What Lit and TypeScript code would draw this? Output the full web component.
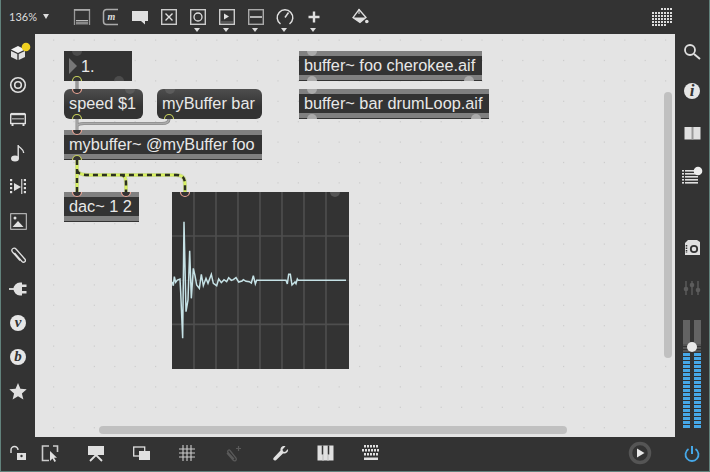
import { LitElement, html, css, svg } from "lit";
import { customElement } from "lit/decorators.js";

const I = "#e0e0e0";
const ic = (w: number, h: number, body: unknown, cls = "") =>
  html`<svg class="ic ${cls}" width=${w} height=${h} viewBox="0 0 ${w} ${h}">${body}</svg>`;

const topIcons = [
  { c: 81.5, arrow: false, i: ic(18, 18, svg`<path d="M1.500 1v16" stroke="#999" stroke-width="1.300"/><path d="M16.500 1v16" stroke="#999" stroke-width="1.300"/><rect x="1" y="1" width="16" height="1.800" fill="#aaa"/><rect x="3" y="13.500" width="12" height="3" fill="#8a8a8a"/><rect x="3" y="12" width="12" height="1" fill="#bbb"/>`) },
  { c: 110.5, arrow: false, i: html`<svg class="ic" width="18" height="18" viewBox="0 0 18 18"><path d="M16 1.500H4.500a3 3 0 0 0-3 3v9a3 3 0 0 0 3 3H16" fill="none" stroke="#aaa" stroke-width="1.500"/><text x="9.500" y="11.500" font-family="Liberation Serif" font-style="italic" font-weight="bold" font-size="10" fill="#ddd" text-anchor="middle">m</text></svg>` },
  { c: 139.5, arrow: false, i: ic(18, 18, svg`<path d="M1 3h16v10h-3v3.500L10 13H1z" fill="${I}"/>`) },
  { c: 168.5, arrow: false, i: ic(18, 18, svg`<rect x="1.700" y="1.700" width="14.600" height="14.600" fill="none" stroke="#ccc" stroke-width="1.400"/><path d="M5.500 5.500l7 7M12.500 5.500l-7 7" stroke="${I}" stroke-width="1.400"/>`) },
  { c: 197.5, arrow: true, i: ic(18, 18, svg`<rect x="1.700" y="1.700" width="14.600" height="14.600" fill="none" stroke="#ccc" stroke-width="1.400"/><circle cx="9" cy="9" r="4" fill="none" stroke="${I}" stroke-width="1.300"/>`) },
  { c: 226.5, arrow: true, i: ic(18, 18, svg`<rect x="1.700" y="1.700" width="14.600" height="14.600" fill="none" stroke="#ccc" stroke-width="1.400"/><path d="M6 5.500v6l5-3z" fill="${I}"/><path d="M3 14h12" stroke="#777"/>`) },
  { c: 255.5, arrow: true, i: ic(18, 18, svg`<rect x="1.700" y="1.700" width="14.600" height="14.600" fill="none" stroke="#aaa" stroke-width="1.400"/><path d="M3 9h12" stroke="${I}" stroke-width="1.500"/>`) },
  { c: 284.5, arrow: true, i: ic(18, 18, svg`<path d="M4.500 16A7.800 7.800 0 1 1 13.500 16" fill="none" stroke="${I}" stroke-width="1.500"/><path d="M9 9.500l3.500-5" stroke="${I}" stroke-width="1.500"/>`) },
  { c: 313.5, arrow: true, i: ic(14, 18, svg`<path d="M7 3.500v11M1.500 9h11" stroke="${I}" stroke-width="2.400"/>`) },
  { c: 360, arrow: false, i: ic(18, 18, svg`<path d="M8 1.500l7 8-6 5-7-5z" fill="none" stroke="${I}" stroke-width="1.300"/><path d="M2 9.500h13l-6 5z" fill="${I}"/><path d="M8 1v5" stroke="${I}"/><circle cx="15.800" cy="13.500" r="1.800" fill="${I}"/>`) },
];

const dots = (xs: number[][]) => xs.map(([x, y]) => svg`<rect x=${x} y=${y} width="2" height="2" fill="#ddd"/>`);
const grid = (() => {
  const o: number[][] = [];
  for (let r = 0; r < 6; r++) for (let c = 0; c < 7; c++) {
    if ((r === 0 && c < 3) || (r === 5 && c > 4)) continue;
    o.push([c * 3, r * 3 + (r === 0 ? 0 : 1)]);
  }
  return o;
})();

const leftIcons = [
  ic(26, 22, svg`<path d="M10 6l7 3.500-7 3.500-7-3.500z" fill="#f2f2f2"/><path d="M3 11l6.300 3v6L3 17z" fill="${I}"/><path d="M10.700 14L17 11v6l-6.300 3z" fill="${I}"/><circle cx="18" cy="7" r="4.300" fill="#f0d020"/>`, "cube"),
  ic(18, 18, svg`<circle cx="9" cy="9" r="7.300" fill="none" stroke="${I}" stroke-width="1.600"/><circle cx="9" cy="9" r="3.300" fill="none" stroke="${I}" stroke-width="1.600"/>`),
  ic(18, 16, svg`<rect x="1.700" y="3.500" width="14.600" height="9" fill="none" stroke="${I}" stroke-width="1.400"/><rect x="3" y="7" width="12" height="1.500" fill="#999"/><path d="M3.500 12.500v2.500M14.500 12.500v2.500" stroke="${I}" stroke-width="2"/><path d="M1.700 2.500h14.600" stroke="${I}" stroke-width="1.200"/>`),
  ic(16, 18, svg`<ellipse cx="5" cy="14.500" rx="4" ry="3" fill="${I}"/><path d="M8.200 14.500V1c.5 3 5.500 3.500 5.500 8" fill="none" stroke="${I}" stroke-width="1.400"/>`),
  ic(18, 18, svg`${[1, 5, 9, 13].map((y) => svg`<rect x="1" y=${y} width="2.200" height="2.200" fill="${I}"/><rect x="14.800" y=${y} width="2.200" height="2.200" fill="${I}"/>`)}<path d="M5 5v8l7-4z" fill="${I}"/><rect x="12" y="1" width="1.400" height="15" fill="#bbb"/>`),
  ic(17, 17, svg`<rect x="0.700" y="0.700" width="15.600" height="15.600" fill="none" stroke="#ccc" stroke-width="1"/><circle cx="5" cy="5" r="1.500" fill="${I}"/><path d="M2.500 14l5.500-6 5.500 6z" fill="${I}"/>`),
  ic(16, 18, svg`<path d="M4.500 7l7.500 8.500c2 2 4.500-.5 2.800-2.500L6 3C4 .500 .500 3.500 2.500 6L10 14.500" fill="none" stroke="${I}" stroke-width="1.300"/>`),
  ic(18, 16, svg`<path d="M0 8h5" stroke="${I}" stroke-width="1.800"/><path d="M4.500 8a6.500 6.500 0 0 1 6.500-6.500h2v13h-2A6.500 6.500 0 0 1 4.500 8z" fill="${I}"/><rect x="12" y="3.500" width="5.500" height="2.500" fill="${I}"/><rect x="12" y="10" width="5.500" height="2.500" fill="${I}"/>`),
  html`<span class="ball">v</span>`,
  html`<span class="ball">b</span>`,
  ic(18, 17, svg`<path d="M9 0l2.400 5.800 6.300.5-4.800 4.100 1.500 6.100L9 13.300 3.600 16.500 5.100 10.400.300 6.300 6.600 5.800z" fill="${I}"/>`),
];

const rightIcons = [
  ic(18, 18, svg`<circle cx="7" cy="7" r="5" fill="none" stroke="${I}" stroke-width="1.800"/><path d="M11 11l6 5" stroke="${I}" stroke-width="2"/>`),
  html`<span class="ball info">i</span>`,
  ic(17, 14, svg`<rect x="0.500" y="1" width="16" height="12.500" fill="${I}"/><rect x="7.500" y="1" width="2" height="12.500" fill="#999"/>`),
  ic(22, 18, svg`${[4, 7, 10, 13, 16].map((y) => svg`<rect x="1" y=${y} width="2" height="1.600" fill="${I}"/><rect x="4" y=${y} width="13" height="1.600" fill="${I}"/>`)}<circle cx="17" cy="5" r="4.300" fill="#eee"/>`, "list"),
];

const sigCord = "M77 160V192M77 170C78 174 82 175 88 175H176C183 175 185 178 185 185V192M120 175C125 175 126 178 126 184V192";
const wave = "36,290 40,302 43,275 47,292 52,285 60,282 62,320 68,460 72,110 78,380 84,345 89,197 94,340 100,250 105,272 110,300 118,310 124,268 130,302 138,280 144,295 154,268 160,295 170,302 176,282 184,293 192,284 200,290 206,278 214,286 220,284 228,278 236,291 246,288 250,284 258,289 268,290 274,294 280,272 286,297 290,286 378,286 382,297 386,268 391,268 396,300 405,291 408,296 412,282 415,286 558,286";

interface Box { t: string; x: number; y: number; w: number; kind: string; }
const boxes: Box[] = [
  { t: "1.", x: 64, y: 51, w: 68, kind: "num" },
  { t: "speed $1", x: 64, y: 89, w: 79, kind: "message" },
  { t: "myBuffer bar", x: 157, y: 89, w: 105, kind: "message" },
  { t: "mybuffer~ @myBuffer foo", x: 64, y: 130, w: 198, kind: "obj" },
  { t: "dac~ 1 2", x: 64, y: 192, w: 75, kind: "obj" },
  { t: "buffer~ foo cherokee.aif", x: 299, y: 51, w: 183, kind: "obj" },
  { t: "buffer~ bar drumLoop.aif", x: 299, y: 89, w: 190, kind: "obj" },
];

const inlets = [[77, 89], [77, 130], [77, 192], [126, 192], [185, 192]];
const outlets = [[77, 81], [77, 119], [169, 119], [77, 160]];
const ghosts = [
  [77, 51, "#4c4c4c", 1], [119, 81, "#4c4c4c", -1], [130, 89, "#5c5c5c", 1], [170, 89, "#5c5c5c", 1],
  [335, 192, "#555", 1], [312, 51, "#aaa", 1], [312, 81, "#aaa", -1], [469, 81, "#aaa", -1],
  [312, 89, "#aaa", 1], [312, 119, "#aaa", -1], [476, 119, "#aaa", -1],
] as [number, number, string, number][];

const bottomIcons: [number, unknown][] = [
  [17, ic(18, 16, svg`<path d="M2 8V5a3.500 3.500 0 0 1 7 0" fill="none" stroke="${I}" stroke-width="1.400"/><rect x="8" y="8" width="9" height="7" fill="${I}"/><circle cx="12.500" cy="11" r="1.200" fill="#333"/>`)],
  [49, ic(18, 17, svg`<path d="M8 1H1.500v14.500H8M12 1h4.500v6" fill="none" stroke="#ccc" stroke-width="1.600"/><path d="M9 6v10l2.500-2.500 2 3.500 1.500-1-2-3.200h3z" fill="${I}"/>`)],
  [95, ic(18, 17, svg`<rect x="1" y="1" width="16" height="9" fill="${I}"/><path d="M9 10l-6 6M9 10l6 6" stroke="${I}" stroke-width="1.800"/>`)],
  [141, ic(18, 15, svg`<rect x="0.700" y="1" width="11" height="9" fill="#333" stroke="${I}" stroke-width="1.300"/><rect x="6" y="5" width="11" height="9" fill="${I}"/>`)],
  [186, ic(18, 18, svg`<path d="M5 1v16M9 1v16M13 1v16M1 5h16M1 9h16M1 13h16" stroke="#ccc" stroke-width="1.100"/>`)],
  [232, ic(18, 17, svg`<path d="M3 8l6 7c2 2 4 0 3-2L6 5.500C5 4 3 6 4 7.500l6 6.500" fill="none" stroke="#5a5a5a" stroke-width="1.300"/><path d="M14.500 1v5M12 3.500h5" stroke="#5a5a5a" stroke-width="1.200"/>`)],
  [279, ic(17, 17, svg`<path d="M16 4l-3 3-2-.5-.5-2L13.500 1.200C10.500.300 8 2.500 8.500 5.500L1.500 13c-1 1.500 1 3.300 2.500 2.200L11 8.500c3 .5 5.600-1.500 5-4.500z" fill="${I}"/>`)],
  [324, ic(17, 16, svg`<rect x="0.500" y="0.500" width="16" height="15" fill="${I}"/><path d="M5.500 0.500v9M11.500 0.500v9" stroke="#333" stroke-width="1.500"/><path d="M6 10v6M11 10v6" stroke="#bbb"/>`)],
  [370, ic(18, 16, svg`${[[2, 0, 5], [0, 4, 6], [2, 8, 5]].map(([x0, y, n]) => Array.from({ length: n }, (_, i) => svg`<rect x=${x0 + i * 3} y=${y} width="2" height="2.500" fill="${I}"/>`))}<rect x="2" y="12.500" width="14" height="2.500" fill="${I}"/>`)],
  [639, ic(24, 24, svg`<circle cx="12" cy="12" r="9.500" fill="none" stroke="#555" stroke-width="3.500"/><path d="M9 7.500v9l7.500-4.500z" fill="#e8e8e8"/>`)],
  [691, ic(16, 17, svg`<path d="M4.500 4A6.500 6.500 0 1 0 11.500 4" fill="none" stroke="#46a8e8" stroke-width="1.800"/><path d="M8 1v8" stroke="#46a8e8" stroke-width="2"/>`)],
];

@customElement("app-root")
export class AppRoot extends LitElement {
  static styles = css`
    :host { display: block; width: 710px; height: 472px; overflow: hidden; font-family: "Liberation Sans", Arial, sans-serif; }
    .frame { width: 710px; height: 472px; box-sizing: border-box; border-left: 1px solid #62827c; border-right: 1px solid #62827c; border-bottom: 1px solid #62827c;
      background: #333; display: grid; grid-template: 34px 403px 1fr / 34px 640px 1fr; }
    .ic { display: block; }
    .top { grid-column: 1 / 4; position: relative; }
    .zoom { position: absolute; left: 8px; top: 9px; font: 11px "Lato", sans-serif; color: #ddd; line-height: 16px; }
    .zoom::after { content: ""; display: inline-block; margin-left: 6px; vertical-align: 2px; border: 3.500px solid transparent; border-top: 5px solid #ddd; border-bottom: 0; }
    .tool { position: absolute; top: 8px; width: 0; height: 18px; display: flex; justify-content: center; }
    .tool svg { flex: none; }
    .arrow { position: absolute; top: 20px; left: -3.500px; border: 3.500px solid transparent; border-top: 4px solid #ddd; border-bottom: 0; }
    .grid { position: absolute; left: 651px; top: 8px; }
    .left { display: flex; flex-direction: column; align-items: center; }
    .cell { height: 34px; width: 34px; display: flex; align-items: center; justify-content: center; flex: none; }
    .cube { margin-left: 6px; }
    .ball { width: 16px; height: 16px; border-radius: 50%; background: #e6e6e6; color: #333; font: italic bold 15px/15px "Liberation Serif", serif; text-align: center; }
    .info { font-size: 17px; line-height: 16px; }
    .canvas { position: relative; overflow: hidden; background-color: #e4e4e4; }
    .dotgrid { position: absolute; inset: 0; }
    .box { position: absolute; height: 30px; box-sizing: border-box; padding-left: 5px; color: #e8e8e8; font-size: 16.300px; line-height: 29px; white-space: nowrap; background: #333; }
    .message { border-radius: 6px; background: linear-gradient(#4e4e4e, #333 60%); }
    .obj { background: linear-gradient(#808080 5px, #333 5px, #333 24px, #808080 24px, #808080 29px, #333 29px); line-height: 29px; }
    .num { padding-left: 17px; line-height: 30px; }
    .num::before { content: ""; position: absolute; left: 5px; top: 7px; border: 8px solid transparent; border-left: 8px solid #777; border-right: 0; }
    .scope { position: absolute; left: 137px; top: 158px; width: 177px; height: 177px; background: #333; }
    .over { position: absolute; left: -35px; top: -34px; pointer-events: none; }
    .hbar { position: absolute; left: 64px; top: 392px; width: 468px; height: 8px; border-radius: 4px; background: #c0c0c0; }
    .vbar { position: absolute; left: 629px; top: 58px; width: 8px; height: 266px; border-radius: 4px; background: #c0c0c0; }
    .right { display: flex; flex-direction: column; align-items: center; }
    .rcell { height: 42px; width: 34px; display: flex; align-items: center; justify-content: center; flex: none; }
    .first { height: 36px; }
    .spacer { height: 30px; flex: none; }
    .mixer { height: 40px; }
    .meter { position: relative; margin-top: 12px; width: 18px; height: 108px; flex: none; display: grid; grid-template-columns: 7px 7px; column-gap: 4px; }
    .col { display: flex; flex-direction: column; gap: 1px; background: linear-gradient(#636363 24px, transparent 24px); padding-top: 24px; }
    .seg { height: 3px; background: #46a8e8; flex: none; }
    .seg.off { background: #555; height: 2px; }
    .knob { position: absolute; left: 4px; top: 22px; width: 10px; height: 10px; border-radius: 50%; background: #e8e8e8; }
    .bottom { grid-column: 1 / 4; position: relative; }
    .bt { position: absolute; top: 16px; width: 0; height: 0; display: flex; justify-content: center; align-items: center; }
    .bt svg { flex: none; }
  `;

  render() {
    return html`<div class="frame">
      <div class="top">
        <span class="zoom">136%</span>
        ${topIcons.map((t) => html`<div class="tool" style="left:${t.c - 1}px">${t.i}${t.arrow ? html`<span class="arrow"></span>` : ""}</div>`)}
        ${ic(21, 20, svg`${dots(grid)}`, "grid")}
      </div>
      <div class="left">${leftIcons.map((i) => html`<div class="cell">${i}</div>`)}</div>
      <div class="canvas">
        <svg class="dotgrid" width="640" height="403">
          ${Array.from({ length: 20 }, (_, r) => Array.from({ length: 32 }, (_, c) => svg`<rect x=${18 + c * 20.4} y=${5.500 + r * 20.4} width="1.200" height="1.200" fill="#cccccc"/>`))}
        </svg>
        ${boxes.map((b) => html`<div class="box ${b.kind}" style="left:${b.x - 35}px;top:${b.y - 34}px;width:${b.w}px">${b.t}</div>`)}
        <div class="scope">
          <svg width="177" height="177" viewBox="36 21 531 531">
            ${[102, 168, 234, 300, 366, 432, 498].map((x) => svg`<path d="M${x} 21V552" stroke="#4e4e4e" stroke-width="5"/>`)}
            ${[153, 418].map((y) => svg`<path d="M36 ${y}H567" stroke="#4e4e4e" stroke-width="5"/>`)}
            <path d="M36 286H567" stroke="#4e4e4e" stroke-width="2"/>
            <polyline points=${wave} fill="none" stroke="#c6e2e6" stroke-width="4.500"/>
          </svg>
        </div>
        <svg class="over" width="710" height="472">
          ${ghosts.map(([x, y, col, d]) => svg`<path d="M${x - 5} ${y}a5 5 0 0 ${d > 0 ? 0 : 1} 10 0z" fill=${col}/>`)}
          <path d="M77 81V90" stroke="#999" stroke-width="3.500"/>
          <path d="M77 119V130M77 126C78 124 80 123.500 84 123.500H162C167 123.500 169 122 169 119" fill="none" stroke="#8c8c8c" stroke-width="3"/>
          <path d="M77 119V130M77 126C78 124 80 123.500 84 123.500H162C167 123.500 169 122 169 119" fill="none" stroke="#aaa" stroke-width="1.500"/>
          <path d=${sigCord} fill="none" stroke="#c9d6a0" stroke-width="4"/>
          <path d=${sigCord} fill="none" stroke="#d8f060" stroke-width="2.400"/>
          <path d=${sigCord} fill="none" stroke="#2c3020" stroke-width="2.400" stroke-dasharray="5 4"/>
          ${inlets.map(([x, y]) => svg`<path d="M${x - 4.500} ${y}a4.500 4.500 0 0 0 9 0" fill="#333" stroke="#eda595" stroke-width="1.200"/>`)}
          ${outlets.map(([x, y]) => svg`<path d="M${x - 4.500} ${y}a4.500 4.500 0 0 1 9 0" fill="#333" stroke="#c6d05c" stroke-width="1.200"/>`)}
        </svg>
        <div class="hbar"></div>
        <div class="vbar"></div>
      </div>
      <div class="right">
        ${rightIcons.map((i, n) => html`<div class="rcell ${n === 0 ? "first" : ""}">${i}</div>`)}
        <div class="spacer"></div>
        <div class="rcell">
          ${ic(17, 17, svg`<path d="M1 4l3-3h9l3 2v13H1z" fill="${I}"/><circle cx="10" cy="10" r="3.200" fill="none" stroke="#333" stroke-width="1.800"/><path d="M2.500 6v8" stroke="#333" stroke-dasharray="1.500 1" stroke-width="1.500"/>`)}
        </div>
        <div class="rcell mixer">
          ${ic(18, 16, svg`<path d="M3 1v14M9 1v14M15 1v14" stroke="#5c5c5c" stroke-width="1.400"/><circle cx="3" cy="9" r="2.300" fill="#5c5c5c"/><circle cx="9" cy="5" r="2.300" fill="#5c5c5c"/><circle cx="15" cy="10" r="2.300" fill="#5c5c5c"/>`)}
        </div>
        <div class="meter">
          ${[0, 1].map(() => html`<div class="col">${[0, 1, 2].map(() => html`<div class="seg off"></div>`)}${Array.from({ length: 19 }, () => html`<div class="seg"></div>`)}</div>`)}
          <div class="knob"></div>
        </div>
      </div>
      <div class="bottom">
        ${bottomIcons.map(([x, i]) => html`<div class="bt" style="left:${x}px">${i}</div>`)}
      </div>
    </div>`;
  }
}
